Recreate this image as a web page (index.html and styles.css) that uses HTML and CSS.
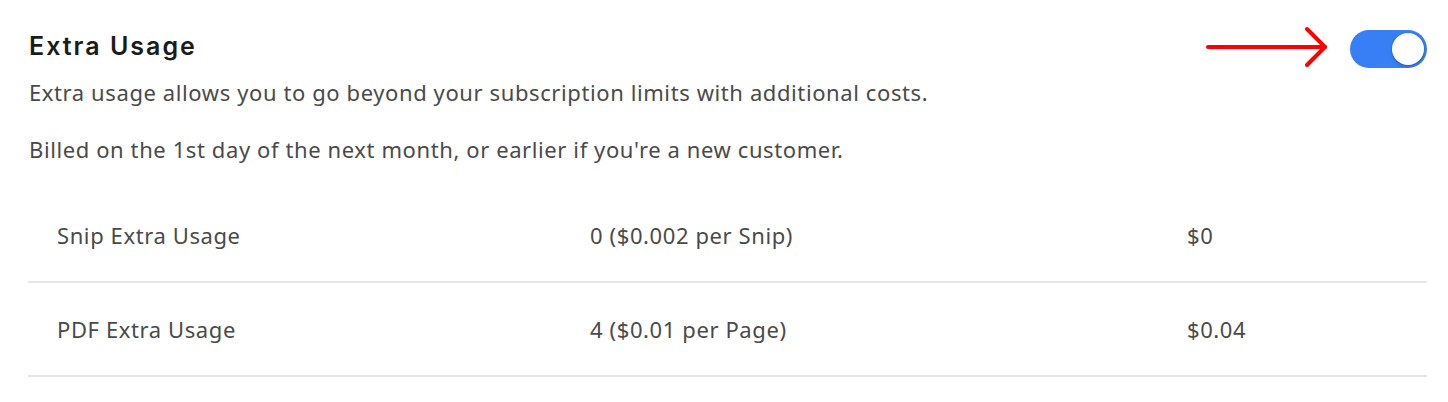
FILE: index.html
```html
<!DOCTYPE html>
<html lang="en">
<head>
<meta charset="utf-8">
<title>Extra Usage</title>
<link rel="stylesheet" href="styles.css">
</head>
<body>
<section class="panel">
  <div class="header">
    <h2 class="title">Extra Usage</h2>
    <div class="toggle-wrap">
      <svg class="arrow" width="130" height="44" viewBox="0 0 130 44" aria-hidden="true">
        <path d="M2 22 H119" stroke="#ff0000" stroke-width="4" fill="none" stroke-linecap="round"/>
        <path d="M101 4 L119 22 L101 40" stroke="#ff0000" stroke-width="4" fill="none" stroke-linecap="round" stroke-linejoin="round"/>
      </svg>
      <button class="toggle on" type="button" aria-pressed="true"><span class="knob"></span></button>
    </div>
  </div>
  <p class="desc">Extra usage allows you to go beyond your subscription limits with additional costs.</p>
  <p class="desc second">Billed on the 1st day of the next month, or earlier if you're a new customer.</p>
  <div class="table">
    <div class="row">
      <span class="cell">Snip Extra Usage</span>
      <span class="cell">0 ($0.002 per Snip)</span>
      <span class="cell">$0</span>
    </div>
    <div class="row">
      <span class="cell">PDF Extra Usage</span>
      <span class="cell">4 ($0.01 per Page)</span>
      <span class="cell">$0.04</span>
    </div>
  </div>
</section>
</body>
</html>
```

FILE: styles.css
```css
* { box-sizing: border-box; }
html, body { margin: 0; background: #ffffff; }
body {
  font-family: "Noto Sans", "Open Sans", sans-serif;
  color: #4a4a4a;
}
.panel {
  padding: 30px 21px 0 28px;
}
.header {
  display: flex;
  justify-content: space-between;
  align-items: flex-start;
}
.title {
  margin: 0;
  padding-left: 1px;
  font-family: "Inter", "Noto Sans", sans-serif;
  font-weight: 600;
  font-size: 25px;
  line-height: 32px;
  color: #1b1b1b;
  letter-spacing: 2px;
}
.toggle-wrap {
  position: relative;
  display: flex;
  align-items: center;
}
.arrow {
  position: absolute;
  right: 91px;
  top: -5px;
}
.toggle {
  width: 77px;
  height: 38px;
  border: none;
  border-radius: 19px;
  background: #387ff6;
  padding: 0 3px 0 0;
  display: flex;
  align-items: center;
  justify-content: flex-end;
}
.knob {
  width: 32px;
  height: 32px;
  border-radius: 50%;
  background: #ffffff;
  box-shadow: 0 1px 3px rgba(0,0,0,0.35);
}
.desc {
  margin: 0;
  padding-left: 1px;
  font-size: 22px;
  line-height: 28px;
  letter-spacing: 0.6px;
  color: #4a4a4a;
}
.desc:first-of-type { margin-top: 10px; }
.second { margin-top: 29px; }
.table {
  margin-top: 26px;
}
.row {
  display: grid;
  grid-template-columns: 533px 597px 1fr;
  padding-left: 29px;
  height: 94px;
  align-items: center;
  border-bottom: 2px solid #e6e6e6;
}
.cell {
  font-size: 22px;
  line-height: 28px;
  letter-spacing: 0.6px;
  color: #4a4a4a;
}
```
